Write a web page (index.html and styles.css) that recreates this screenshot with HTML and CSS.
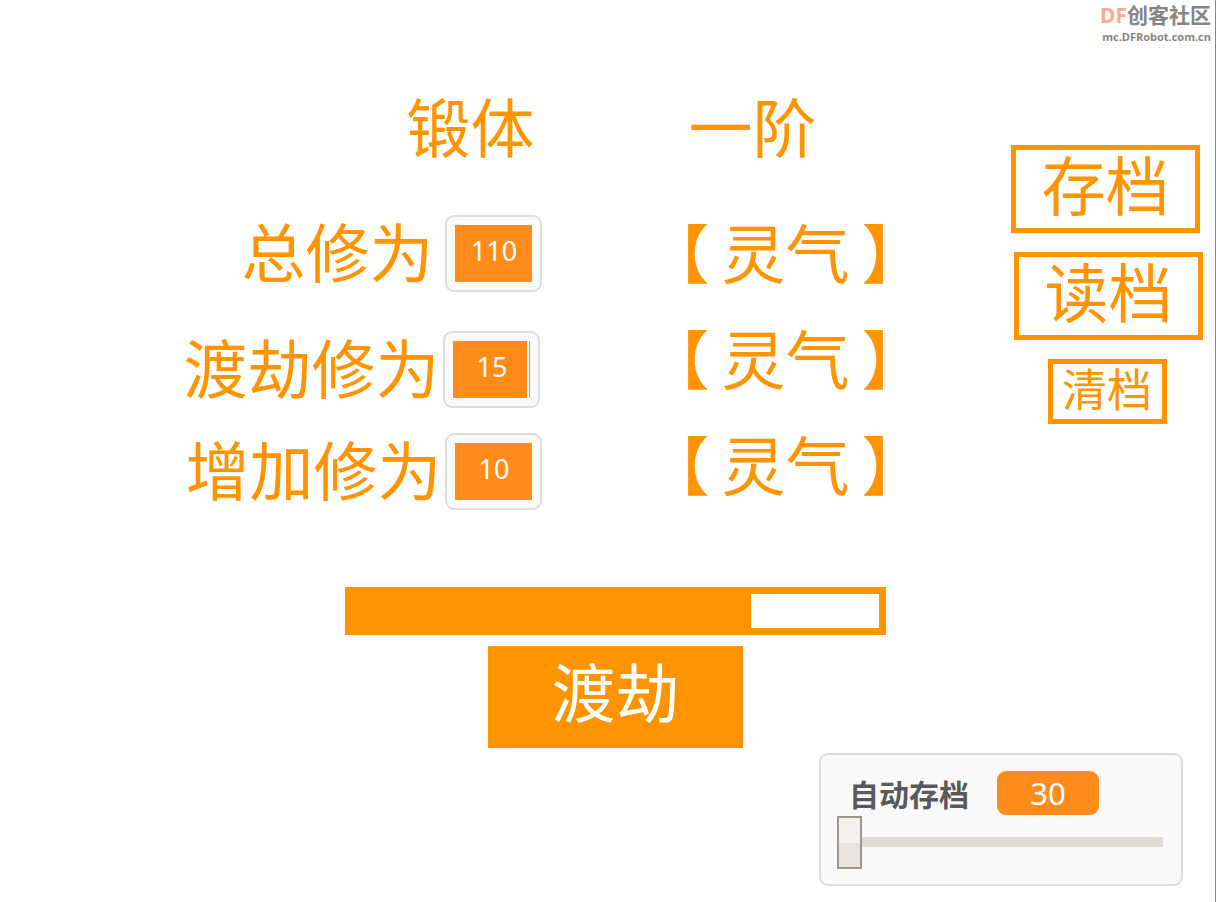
FILE: index.html
```html
<!DOCTYPE html>
<html lang="zh-CN">
<head>
    <meta charset="UTF-8">
    <meta name="viewport" content="width=device-width, initial-scale=1.0">
    <title>锻体 一阶</title>
    <link rel="stylesheet" href="styles.css">
</head>
<body>
    <div class="stage">
        <div class="watermark">
            <div class="site-name"><span>DF</span>创客社区</div>
            <div class="site-url">mc.DFRobot.com.cn</div>
        </div>

        <main class="board">
            <section class="stats">
                <div class="rank">锻体</div>
                <div class="stat total">
                    <label for="total">总修为</label>
                    <div class="monitor"><output id="total">110</output></div>
                </div>
                <div class="stat need">
                    <label for="need">渡劫修为</label>
                    <div class="monitor"><output id="need">15</output></div>
                </div>
                <div class="stat">
                    <label for="gain">增加修为</label>
                    <div class="monitor"><output id="gain">10</output></div>
                </div>
            </section>

            <section class="spirits">
                <div class="level">一阶</div>
                <div class="spirit"><span>【</span><span>灵气</span><span>】</span></div>
                <div class="spirit"><span>【</span><span>灵气</span><span>】</span></div>
                <div class="spirit"><span>【</span><span>灵气</span><span>】</span></div>
            </section>

            <section class="saves">
                <button type="button" class="save-btn">存档</button>
                <button type="button" class="save-btn load">读档</button>
                <button type="button" class="save-btn clear">清档</button>
            </section>
        </main>

        <section class="play">
            <progress class="bar" value="399" max="527" aria-label="渡劫"></progress>
            <button type="button" class="break-btn">渡劫</button>
        </section>

        <section class="autosave">
            <div class="autosave-head">
                <label for="autosave">自动存档</label>
                <output for="autosave">30</output>
            </div>
            <input type="range" id="autosave" min="30" max="300" value="30">
        </section>
    </div>
</body>
</html>
```
FILE: styles.css
```css
* {
    box-sizing: border-box;
}
body {
    margin: 0;
    background-color: #fefefe;
    color: #ff9400;
    font-family: "Noto Sans CJK SC", sans-serif;
    font-size: 64px;
    line-height: 64px;
}
button {
    font: inherit;
    color: inherit;
    cursor: pointer;
}
.stage {
    position: relative;
    min-height: 100vh;
    padding-bottom: 16px;
    border-right: 1px solid #7d8597;
    display: flex;
    flex-direction: column;
}

/* site mark in the corner */
.watermark {
    position: absolute;
    top: 0;
    right: 4px;
    text-align: right;
    color: #858585;
    font-weight: bold;
}
.site-name {
    font-size: 21px;
    line-height: 28px;
}
.site-name span {
    color: #f0b090;
    font-family: "Noto Sans", sans-serif;
}
.site-url {
    font-family: "Open Sans", sans-serif;
    font-size: 11px;
    line-height: 16px;
}

.board {
    display: grid;
    grid-template-columns: 542fr 392fr 280fr;
    padding-top: 92px;
}

/* stats */
.stats {
    display: flex;
    flex-direction: column;
    align-items: flex-end;
}
.rank {
    padding-right: 8px;
    margin-bottom: 59px;
}
.stat {
    display: flex;
    align-items: center;
    gap: 4px;
    white-space: nowrap;
}
.stat label {
    padding-bottom: 10px;
}
.stat.total {
    gap: 12px;
    margin-bottom: 39px;
}
.stat.need {
    padding-right: 2px;
    margin-bottom: 25px;
}
.monitor {
    width: 97px;
    height: 77px;
    padding: 8px;
    background-color: #f9f9f9;
    border: 2px solid #dddddd;
    border-radius: 9px;
}
.monitor output {
    display: block;
    height: 57px;
    background-color: #ff8c1a;
    color: #fff;
    font-family: "Noto Sans", sans-serif;
    font-size: 27px;
    line-height: 52px;
    text-align: center;
}
.need output {
    background-image: linear-gradient(#fff, #fff);
    background-size: 2px 100%;
    background-position: right 1px top;
    background-repeat: no-repeat;
}

/* spirits */
.spirits {
    padding-left: 103px;
    white-space: nowrap;
}
.level {
    padding-left: 43px;
    margin-bottom: 62px;
}
.spirit {
    display: flex;
    gap: 12px;
    margin-bottom: 42px;
}

/* save buttons */
.saves {
    display: flex;
    flex-direction: column;
    align-items: center;
    width: 192px;
    margin-left: auto;
    margin-right: 12px;
    padding-top: 53px;
}
.save-btn {
    align-self: flex-start;
    width: 189px;
    height: 88px;
    margin-bottom: 19px;
    padding: 0 0 14px;
    background: none;
    border: 5px solid #ff9400;
}
.save-btn.load {
    align-self: flex-end;
}
.save-btn.clear {
    align-self: center;
    width: 119px;
    height: 65px;
    padding-bottom: 7px;
    font-size: 45px;
    line-height: 48px;
}

/* progress and breakthrough */
.play {
    display: flex;
    flex-direction: column;
    align-items: center;
    padding-left: 16px;
    margin-top: 51px;
}
.bar {
    appearance: none;
    width: 541px;
    height: 48px;
    margin-bottom: 11px;
    border: 7px solid #ff9400;
    background-color: #fff;
}
.bar::-webkit-progress-bar {
    background-color: #fff;
}
.bar::-webkit-progress-value {
    background-color: #ff9400;
}
.break-btn {
    width: 255px;
    height: 102px;
    padding: 0 0 16px;
    border: none;
    background-color: #ff9400;
    color: #fff;
}

/* autosave slider */
.autosave {
    align-self: flex-end;
    width: 364px;
    height: 133px;
    margin-top: 5px;
    margin-right: 32px;
    padding: 16px 18px 0 16px;
    background-color: #f9f9f9;
    border: 2px solid #dddddd;
    border-radius: 9px;
}
.autosave-head {
    display: flex;
    align-items: center;
    gap: 28px;
    padding-left: 12px;
}
.autosave-head label {
    color: #595959;
    font-size: 30px;
    font-weight: bold;
    line-height: 44px;
}
.autosave-head output {
    width: 102px;
    border-radius: 9px;
    background-color: #ff8c1a;
    color: #fff;
    font-family: "Noto Sans", sans-serif;
    font-size: 31px;
    line-height: 44px;
    text-align: center;
}
.autosave input {
    appearance: none;
    display: block;
    width: 100%;
    height: 53px;
    margin: 0;
    background: none;
}
.autosave input::-webkit-slider-runnable-track {
    height: 10px;
    background-color: #e2dcd6;
}
.autosave input::-webkit-slider-thumb {
    appearance: none;
    width: 25px;
    height: 53px;
    margin-top: -21px;
    border: 2px solid #a0978c;
    background: linear-gradient(#f3f1ee 52%, #e9e4e0 52%);
}
```
